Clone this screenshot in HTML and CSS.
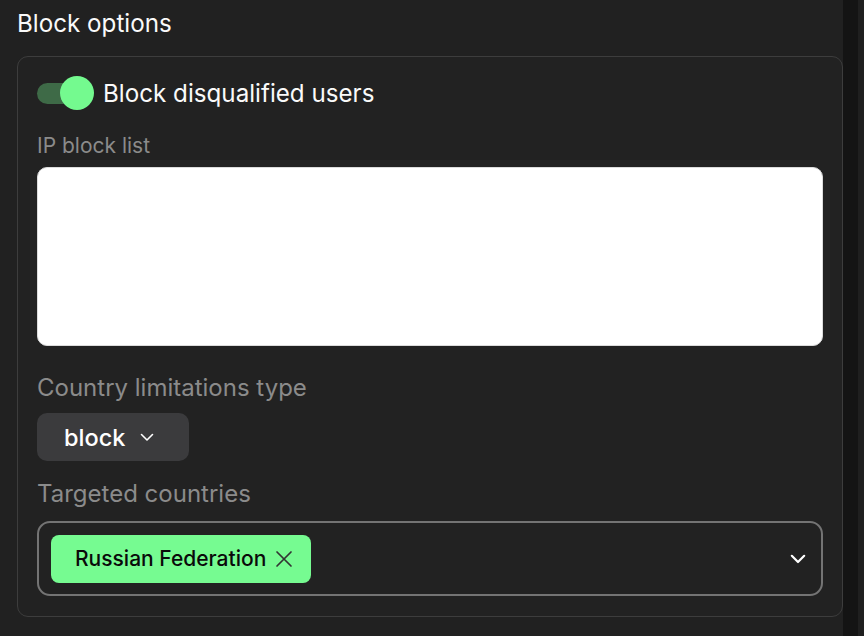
FILE: index.html
```html
<!DOCTYPE html>
<html>
<head>
<meta charset="utf-8">
<link rel="stylesheet" href="styles.css">
</head>
<body>
<div class="page">
  <main class="main">
    <h2 class="title">Block options</h2>
    <section class="card">
      <div class="toggle-row">
        <span class="toggle"><span class="track"></span><span class="knob"></span></span>
        <span class="toggle-label">Block disqualified users</span>
      </div>
      <label class="label label-ip">IP block list</label>
      <textarea class="textarea"></textarea>
      <label class="label label-country">Country limitations type</label>
      <button class="select">block
        <svg class="chev-sm" width="14" height="9" viewBox="0 0 14 9"><path d="M1.5 1.5 L7 7 L12.5 1.5" fill="none" stroke="#fff" stroke-width="1.6" stroke-linecap="round" stroke-linejoin="round"/></svg>
      </button>
      <label class="label label-target">Targeted countries</label>
      <div class="multi">
        <span class="tag">Russian Federation
          <svg class="tag-x" width="18" height="18" viewBox="0 0 18 18"><path d="M2 2 L16 16 M16 2 L2 16" stroke="#333" stroke-width="1.7" stroke-linecap="round"/></svg>
        </span>
        <svg class="chev" width="16" height="10" viewBox="0 0 16 10"><path d="M1.8 1.8 L8 8 L14.2 1.8" fill="none" stroke="#fff" stroke-width="2.2" stroke-linecap="round" stroke-linejoin="round"/></svg>
      </div>
    </section>
  </main>
  <div class="scroll"></div>
  <div class="edge"></div>
</div>
</body>
</html>
```
FILE: styles.css
```css
html, body {
  margin: 0;
  padding: 0;
  background: #212121;
  height: 100%;
}
body {
  font-family: Inter, "Noto Sans", sans-serif;
  color: #fff;
}
.page {
  display: flex;
  height: 636px;
  overflow: hidden;
}
.main {
  width: 843px;
  box-sizing: border-box;
  padding: 9px 0 0 17px;
}
.title {
  margin: 0;
  font-size: 24.2px;
  font-weight: 400;
  line-height: 29px;
  color: #fafafa;
}
.card {
  margin-top: 18px;
  width: 826px;
  box-sizing: border-box;
  border: 1px solid #3d3d3d;
  border-radius: 11px;
  background: #222;
  padding: 19px 19px 19px 19px;
  display: flex;
  flex-direction: column;
  align-items: flex-start;
  height: 561px;
}
.toggle-row {
  display: flex;
  align-items: center;
  gap: 9px;
}
.toggle {
  position: relative;
  width: 57px;
  height: 34px;
  display: inline-block;
}
.track {
  position: absolute;
  left: 0;
  top: 7px;
  width: 50px;
  height: 21px;
  border-radius: 11px;
  background: #3e6a47;
}
.knob {
  position: absolute;
  right: 0;
  top: 0;
  width: 34px;
  height: 34px;
  border-radius: 50%;
  background: #74fa8f;
}
.toggle-label {
  font-size: 24.2px;
  font-weight: 400;
  line-height: 29px;
  color: #fafafa;
}
.label {
  display: block;
  color: #8b8b8b;
  font-size: 21px;
  line-height: 25px;
}
.label-ip {
  margin-top: 23px;
}
.textarea {
  margin-top: 9px;
  width: 786px;
  height: 179px;
  box-sizing: border-box;
  background: #fff;
  border: 1px solid #dcdcdc;
  border-radius: 10px;
  resize: none;
  display: block;
}
.label-country {
  margin-top: 27px;
  font-size: 24px;
  line-height: 29px;
}
.select {
  margin-top: 11px;
  width: 152px;
  height: 48px;
  border: none;
  border-radius: 10px;
  background: #3b3b3d;
  color: #fff;
  font-family: Inter, "Noto Sans", sans-serif;
  font-size: 23.5px;
  font-weight: 500;
  display: flex;
  align-items: center;
  padding: 0 0 0 27px;
  gap: 15px;
}
.chev-sm {
  display: block;
}
.label-target {
  margin-top: 18px;
  font-size: 24px;
  line-height: 29px;
}
.multi {
  margin-top: 13px;
  width: 786px;
  height: 75px;
  box-sizing: border-box;
  border: 2px solid #747474;
  border-radius: 13px;
  display: flex;
  align-items: center;
  justify-content: space-between;
  padding: 0 15px 0 12px;
}
.tag {
  display: flex;
  align-items: center;
  height: 48px;
  box-sizing: border-box;
  padding: 0 18px 0 24px;
  background: #76fb91;
  color: #0a0a0a;
  border-radius: 8px;
  font-size: 21px;
  font-weight: 500;
  gap: 9px;
}
.tag-x {
  display: block;
}
.chev {
  display: block;
}
.scroll {
  width: 15px;
  background: #141414;
}
.edge {
  flex: 1;
  background: #1f1f1f;
}
```
